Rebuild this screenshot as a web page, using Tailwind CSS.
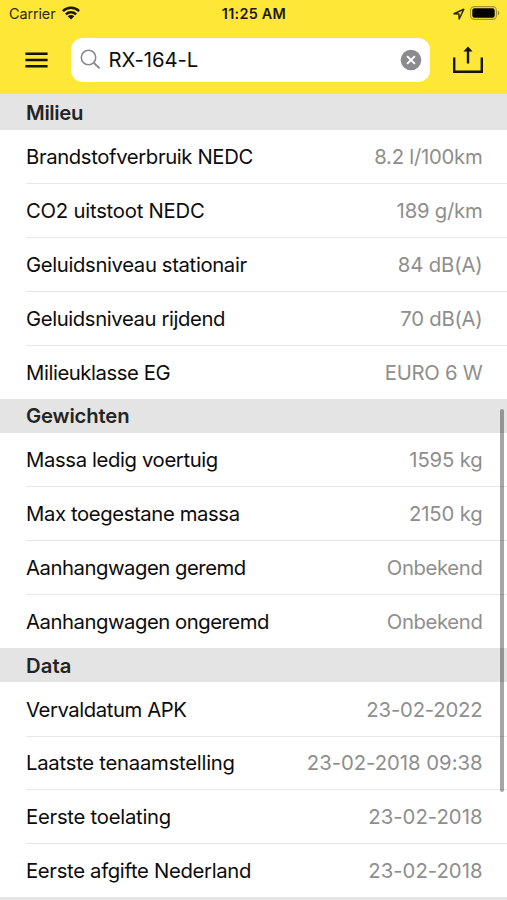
<!DOCTYPE html>
<html lang="nl">
<head>
<meta charset="utf-8">
<title>RX-164-L</title>
<script src="https://cdn.jsdelivr.net/npm/@tailwindcss/browser@4"></script>
</head>
<body class="relative h-[900px] w-[507px] overflow-hidden bg-white font-['Inter','Liberation_Sans',sans-serif] text-[20.3px] leading-none text-[#0c0c0c]">

<header class="h-[94px] bg-[#ffe737]">
  <div class="grid h-[28px] grid-cols-3 items-center text-[14.4px]">
    <div class="flex items-center pl-[9px]">
      <span class="tracking-[-0.1px] text-[#2c290c]">Carrier</span>
      <svg class="ml-[6.5px] mb-[2px] h-[14px] w-[18px]" viewBox="0 0 18 14">
        <g fill="none" stroke="#1a1804" stroke-width="2.5">
          <path d="M0.9 5.1A11.5 11.5 0 0 1 17.1 5.1"/>
          <path d="M3.9 8.3A7.3 7.3 0 0 1 14.1 8.3"/>
        </g>
        <path d="M9 13.6L5.7 10.3A4.7 4.7 0 0 1 12.3 10.3Z" fill="#1a1804"/>
      </svg>
    </div>
    <div class="pl-[1px] text-center font-semibold tracking-[0.27px] text-[#1a1804]">11:25 AM</div>
    <div class="flex items-center justify-end pr-[7px]">
      <svg class="mr-[5px] h-[12px] w-[12px]" viewBox="0 0 12 12"><path d="M1 5.8L10.8 1.2L6.2 11L5.9 6.1Z" fill="none" stroke="#2c290c" stroke-width="1.5" stroke-linejoin="round"/></svg>
      <svg class="mb-[2px] h-[14px] w-[30px]" viewBox="0 0 30 14"><rect x="0.6" y="0.6" width="25.8" height="12.8" rx="3.8" fill="none" stroke="#a4952c" stroke-width="1.1"/><rect x="2.3" y="2.3" width="22.4" height="9.4" rx="2.2" fill="#050500"/><path d="M27.7 4.6Q29.4 5.3 29.4 7T27.7 9.4Z" fill="#a4952c"/></svg>
    </div>
  </div>
  <div class="flex h-[64px] items-center pl-[25px]">
    <svg class="mb-[1px] h-[16px] w-[23px]" viewBox="0 0 23 16"><path d="M0.4 1.7H22.6M0.4 8H22.6M0.4 14.2H22.6" stroke="#141200" stroke-width="2.5"/></svg>
    <div class="ml-[22.5px] flex h-[44px] w-[359.5px] items-center rounded-[12px] bg-white pl-[9px] pr-[8px]">
      <svg class="mb-[2px] h-[21px] w-[21px]" viewBox="0 0 21 21"><circle cx="8.5" cy="8.5" r="7.2" fill="none" stroke="#8a8a8e" stroke-width="1.6"/><path d="M13.7 13.7L19.6 19.4" stroke="#8a8a8e" stroke-width="2"/></svg>
      <span class="ml-[8px] flex-1 pt-[1px] tracking-[-0.09px]">RX-164-L</span>
      <svg class="h-[22px] w-[22px]" viewBox="0 0 22 22"><circle cx="11" cy="11" r="10.3" fill="#8b8b8f"/><path d="M7.1 7.1L14.9 14.9M14.9 7.1L7.1 14.9" stroke="#fff" stroke-width="2"/></svg>
    </div>
    <svg class="mb-[1px] ml-[22px] h-[28px] w-[32px]" viewBox="0 0 32 28"><path d="M2.2 11.5V25.7H29.8V11.5" fill="none" stroke="#141200" stroke-width="2.4"/><path d="M16 17.5V3" stroke="#141200" stroke-width="2.4"/><path d="M16 0.5L20.6 5.6H11.4Z" fill="#141200"/></svg>
  </div>
</header>

<main>
  <h2 class="flex h-[35.6px] items-center bg-[#e4e4e4] pl-[26px] pt-[3px] font-semibold tracking-[-0.32px] text-[#242424]">Milieu</h2>
  <ul>
    <li class="h-[53.8px] pl-[26px]"><div class="flex h-full items-center justify-between pr-[24.5px] pt-[2px]"><span class="tracking-[-0.37px]">Brandstofverbruik NEDC</span><span class="tracking-[-0.24px] text-[#8e8e8e]">8.2 l/100km</span></div></li>
    <li class="h-[53.8px] pl-[26px]"><div class="flex h-full items-center justify-between border-t border-[#e7e7e7] pr-[24.5px] pt-[1px]"><span class="tracking-[-0.23px]">CO2 uitstoot NEDC</span><span class="tracking-[-0.23px] text-[#8e8e8e]">189 g/km</span></div></li>
    <li class="h-[53.8px] pl-[26px]"><div class="flex h-full items-center justify-between border-t border-[#e7e7e7] pr-[24.5px] pt-[1px]"><span class="tracking-[-0.36px]">Geluidsniveau stationair</span><span class="tracking-[-0.15px] text-[#8e8e8e]">84 dB(A)</span></div></li>
    <li class="h-[53.8px] pl-[26px]"><div class="flex h-full items-center justify-between border-t border-[#e7e7e7] pr-[24.5px] pt-[1px]"><span class="tracking-[-0.39px]">Geluidsniveau rijdend</span><span class="tracking-[-0.24px] text-[#8e8e8e]">70 dB(A)</span></div></li>
    <li class="h-[53.8px] pl-[26px]"><div class="flex h-full items-center justify-between border-t border-[#e7e7e7] pr-[24.5px] pt-[1px]"><span class="tracking-[-0.42px]">Milieuklasse EG</span><span class="tracking-[-0.25px] text-[#8e8e8e]">EURO 6 W</span></div></li>
  </ul>
  <h2 class="flex h-[34px] items-center bg-[#e4e4e4] pl-[26px] pt-[2px] font-semibold tracking-[-0.15px] text-[#242424]">Gewichten</h2>
  <ul>
    <li class="h-[53.8px] pl-[26px]"><div class="flex h-full items-center justify-between pr-[24.5px] pt-[2px]"><span class="tracking-[-0.37px]">Massa ledig voertuig</span><span class="tracking-[-0.16px] text-[#8e8e8e]">1595 kg</span></div></li>
    <li class="h-[53.8px] pl-[26px]"><div class="flex h-full items-center justify-between border-t border-[#e7e7e7] pr-[24.5px] pt-[1px]"><span class="tracking-[-0.39px]">Max toegestane massa</span><span class="tracking-[-0.14px] text-[#8e8e8e]">2150 kg</span></div></li>
    <li class="h-[53.8px] pl-[26px]"><div class="flex h-full items-center justify-between border-t border-[#e7e7e7] pr-[24.5px] pt-[1px]"><span class="tracking-[-0.47px]">Aanhangwagen geremd</span><span class="tracking-[-0.36px] text-[#8e8e8e]">Onbekend</span></div></li>
    <li class="h-[53.8px] pl-[26px]"><div class="flex h-full items-center justify-between border-t border-[#e7e7e7] pr-[24.5px] pt-[1px]"><span class="tracking-[-0.47px]">Aanhangwagen ongeremd</span><span class="tracking-[-0.36px] text-[#8e8e8e]">Onbekend</span></div></li>
  </ul>
  <h2 class="flex h-[34px] items-center bg-[#e4e4e4] pl-[26px] pt-[2px] font-semibold tracking-[0.1px] text-[#242424]">Data</h2>
  <ul>
    <li class="h-[53.8px] pl-[26px]"><div class="flex h-full items-center justify-between pr-[24.5px] pt-[2px]"><span class="tracking-[-0.42px]">Vervaldatum APK</span><span class="tracking-[-0.18px] text-[#8e8e8e]">23-02-2022</span></div></li>
    <li class="h-[53.8px] pl-[26px]"><div class="flex h-full items-center justify-between border-t border-[#e7e7e7] pr-[24.5px] pt-[1px]"><span class="tracking-[-0.25px]">Laatste tenaamstelling</span><span class="tracking-[-0.02px] text-[#8e8e8e]">23-02-2018 09:38</span></div></li>
    <li class="h-[53.8px] pl-[26px]"><div class="flex h-full items-center justify-between border-t border-[#e7e7e7] pr-[24.5px] pt-[1px]"><span class="tracking-[-0.25px]">Eerste toelating</span><span class="tracking-[0.02px] text-[#8e8e8e]">23-02-2018</span></div></li>
    <li class="h-[53.8px] pl-[26px]"><div class="flex h-full items-center justify-between border-t border-[#e7e7e7] pr-[24.5px] pt-[1px]"><span class="tracking-[-0.32px]">Eerste afgifte Nederland</span><span class="tracking-[0.02px] text-[#8e8e8e]">23-02-2018</span></div></li>
  </ul>
  <div class="h-[34px] bg-[#e4e4e4]"></div>
</main>

<div class="absolute left-[499.5px] top-[409px] h-[383px] w-[4px] rounded-full bg-black/35"></div>
</body>
</html>
